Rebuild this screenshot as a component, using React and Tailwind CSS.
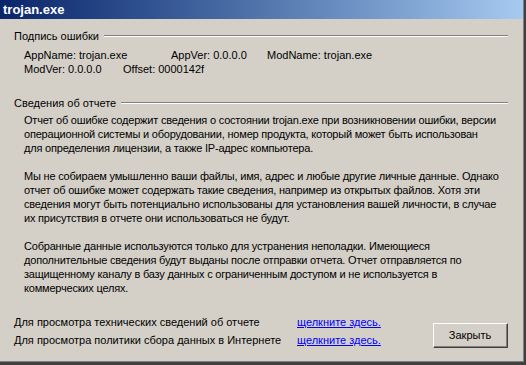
import React from "react";

const font = { fontFamily: '"Liberation Sans", "DejaVu Sans", sans-serif' };

function GroupHeader({ children }) {
  return (
    <div className="flex items-center h-[14px]">
      <span className="whitespace-nowrap pr-[5px]">{children}</span>
      <div className="flex-1 flex flex-col">
        <div className="h-px bg-[#808080]" />
        <div className="h-px bg-white" />
      </div>
    </div>
  );
}

function Para({ lines }) {
  return (
    <p className="whitespace-nowrap tracking-[-0.2px]">
      {lines.map((l, i) => (
        <span key={i} className="block h-[14px]">
          {l}
        </span>
      ))}
    </p>
  );
}

export default function App() {
  return (
    <div
      className="w-[526px] h-[365px] bg-[#d4d0c8] text-black text-[11px] leading-[14px] flex flex-col overflow-hidden border-r-[2px] border-b-[3px] border-r-[#404040] border-b-[#404040]"
      style={font}
    >
      <div className="flex-1 flex flex-col border-r border-b border-r-[#808080] border-b-[#808080]">
        <div className="h-[19px] shrink-0 flex items-center pl-[3px] bg-gradient-to-r from-[#0a246a] to-[#a6caf0] text-white font-bold text-[13px]">
          trojan.exe
        </div>
        <div className="flex-1 flex flex-col pl-[14px] pr-[15px] pt-[10px]">
          <GroupHeader>Подпись ошибки</GroupHeader>
          <div className="pl-[10px] pt-[5px] flex flex-col">
            <div className="flex h-[14px]">
              <span className="w-[147px]">AppName: trojan.exe</span>
              <span className="w-[96px]">AppVer: 0.0.0.0</span>
              <span>ModName: trojan.exe</span>
            </div>
            <div className="flex h-[14px]">
              <span className="w-[99px]">ModVer: 0.0.0.0</span>
              <span>Offset: 0000142f</span>
            </div>
          </div>
          <div className="pt-[20px]">
            <GroupHeader>Сведения об отчете</GroupHeader>
          </div>
          <div className="pl-[10px] pt-[3px] flex flex-col gap-[14px]">
            <Para
              lines={[
                "Отчет об ошибке содержит сведения о состоянии trojan.exe при возникновении ошибки, версии",
                "операционной системы и оборудовании, номер продукта, который может быть использован",
                "для определения лицензии, а также IP-адрес компьютера.",
              ]}
            />
            <Para
              lines={[
                "Мы не собираем умышленно ваши файлы, имя, адрес и любые другие личные данные. Однако",
                "отчет об ошибке может содержать такие сведения, например из открытых файлов. Хотя эти",
                "сведения могут быть потенциально использованы для установления вашей личности, в случае",
                "их присутствия в отчете они использоваться не будут.",
              ]}
            />
            <Para
              lines={[
                "Собранные данные используются только для устранения неполадки. Имеющиеся",
                "дополнительные сведения будут выданы после отправки отчета. Отчет отправляется по",
                "защищенному каналу в базу данных с ограниченным доступом и не используется в",
                "коммерческих целях.",
              ]}
            />
          </div>
          <div className="mt-[20px] flex items-start">
            <div className="flex flex-col gap-[4px]">
              <div className="flex h-[14px]">
                <span className="w-[283px]">Для просмотра технических сведений об отчете</span>
                <a className="text-[#0000ff] underline cursor-pointer">щелкните здесь.</a>
              </div>
              <div className="flex h-[14px]">
                <span className="w-[283px]">Для просмотра политики сбора данных в Интернете</span>
                <a className="text-[#0000ff] underline cursor-pointer">щелкните здесь.</a>
              </div>
            </div>
            <div className="flex-1" />
            <button
              className="mt-[8px] w-[75px] h-[25px] bg-[#d4d0c8] border border-t-white border-l-white border-r-[#404040] border-b-[#404040] flex"
              style={font}
            >
              <span className="flex-1 flex items-center justify-center border-r border-b border-r-[#808080] border-b-[#808080] text-[11px]">
                Закрыть
              </span>
            </button>
          </div>
        </div>
      </div>
    </div>
  );
}
